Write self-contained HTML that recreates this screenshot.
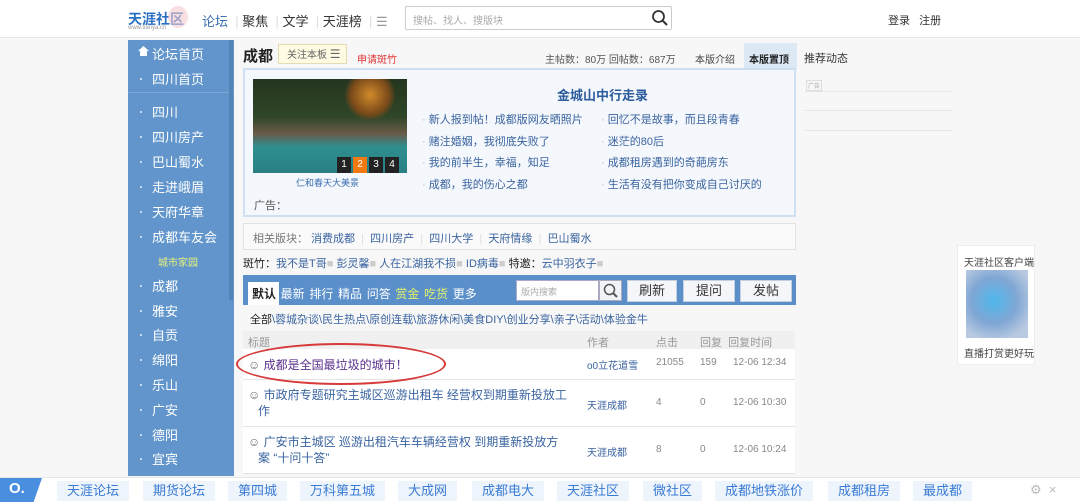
<!DOCTYPE html>
<html><head><meta charset="utf-8"><style>
*{margin:0;padding:0;box-sizing:border-box}
body{width:1080px;height:502px;overflow:hidden;background:#f7f7f7;font-family:"Liberation Sans","Noto Sans CJK SC",sans-serif;font-size:12px;color:#333;position:relative}
.a{position:absolute;white-space:nowrap}
.hd{left:0;top:0;width:1080px;height:38px;background:#fff;border-bottom:1px solid #e6e6e6}
.side{left:128px;top:40px;width:106px;height:436px;background:#6195cb}
.si{position:absolute;left:24px;color:#fff;font-size:13px}
.si:before{content:"";position:absolute;left:-12px;top:9px;width:2px;height:2px;background:#c4d8ef}
.lk{color:#3a64a0}
.btn{position:absolute;top:280px;height:22px;background:#f4f6f9;border:1px solid #c4d0de;font-size:13px;text-align:center;line-height:20px;color:#333}
.bb{position:absolute;top:481px;height:20px;background:#eef4fb;color:#3a7bd5;font-size:13px;line-height:20px;padding:0 10px}
.row{position:absolute;left:243px;width:552px;border-bottom:1px solid #e4e4e4;background:#fff}
</style></head><body>
<div class="a hd"></div>
<div class="a" style="left:128px;top:9px;font-size:14px;font-weight:bold;color:#2b6fc2">天涯社区</div>
<div class="a" style="left:128px;top:25px;font-size:6px;color:#999">www.tianya.cn</div>
<div class="a" style="left:168px;top:6px;width:20px;height:22px;border-radius:50%;background:#f3c9cf;opacity:.6"></div>
<div class="a" style="left:202px;top:11px;font-size:13px;color:#3a6fb0">论坛 <span style="color:#ddd">&nbsp;|&nbsp;</span><span style="color:#333">聚焦</span> <span style="color:#ddd">&nbsp;|&nbsp;</span><span style="color:#333">文学</span> <span style="color:#ddd">&nbsp;|&nbsp;</span><span style="color:#333">天涯榜</span> <span style="color:#ddd">&nbsp;|&nbsp;</span><span style="color:#999">☰</span></div>
<div class="a" style="left:405px;top:6px;width:267px;height:24px;border:1px solid #ccc;background:#fff;border-radius:2px"></div>
<div class="a" style="left:413px;top:12px;font-size:10px;color:#aaa">搜帖、找人、搜版块</div>
<svg class="a" style="left:651px;top:9px" width="18" height="18"><circle cx="7.5" cy="7.5" r="5.5" fill="none" stroke="#333" stroke-width="1.8"/><path d="M11.5 11.5 L16 16" stroke="#333" stroke-width="2"/></svg>
<div class="a" style="left:888px;top:12px;font-size:11px">登录 &nbsp;&nbsp;注册</div>

<div class="a side">
<div class="a" style="left:24px;top:4px;color:#fff;font-size:13px">论坛首页</div>
<svg class="a" style="left:10px;top:6px" width="11" height="10"><path d="M5.5 0 L11 5 L9 5 L9 10 L2 10 L2 5 L0 5 Z" fill="#fff"/></svg>
<div class="si" style="top:29px">四川首页</div>
<div class="a" style="left:0;top:52px;width:106px;border-top:1px solid #7aa6d4"></div>
<div class="si" style="top:62px">四川</div>
<div class="si" style="top:87px">四川房产</div>
<div class="si" style="top:112px">巴山蜀水</div>
<div class="si" style="top:137px">走进峨眉</div>
<div class="si" style="top:162px">天府华章</div>
<div class="si" style="top:187px">成都车友会</div>
<div class="a" style="left:30px;top:214px;font-size:10px;color:#e8f27a">城市家园</div>
<div class="si" style="top:236px">成都</div>
<div class="si" style="top:261px">雅安</div>
<div class="si" style="top:285px">自贡</div>
<div class="si" style="top:310px">绵阳</div>
<div class="si" style="top:335px">乐山</div>
<div class="si" style="top:360px">广安</div>
<div class="si" style="top:385px">德阳</div>
<div class="si" style="top:409px">宜宾</div>
<div class="a" style="left:101px;top:0;width:4px;height:260px;background:#5384b8"></div>
</div>

<div class="a" style="left:243px;top:45px;font-size:15px;font-weight:bold;color:#222">成都</div>
<div class="a" style="left:278px;top:44px;width:69px;height:20px;background:#fffbe3;border:1px solid #e6dcb4;font-size:10px;line-height:18px;padding-left:8px;color:#666">关注本板 <span style="font-size:12px">☰</span></div>
<div class="a" style="left:357px;top:51px;font-size:10px;color:#e53333">申请斑竹</div>
<div class="a" style="left:545px;top:51px;font-size:10px;color:#555">主帖数：80万 回帖数：687万</div>
<div class="a" style="left:695px;top:51px;font-size:10px;color:#444">本版介绍</div>
<div class="a" style="left:744px;top:43px;width:53px;height:26px;background:#dde8f5"></div>
<div class="a" style="left:749px;top:51px;font-size:10px;font-weight:bold;color:#222">本版置顶</div>
<div class="a" style="left:804px;top:50px;font-size:11px;color:#333">推荐动态</div>
<div class="a" style="left:806px;top:80px;font-size:6px;color:#aaa;border:1px solid #ddd;padding:0 1px">广告</div>
<div class="a" style="left:805px;top:91px;width:147px;border-top:1px solid #e6e6e6"></div>
<div class="a" style="left:805px;top:110px;width:147px;border-top:1px solid #e6e6e6"></div>
<div class="a" style="left:805px;top:130px;width:147px;border-top:1px solid #e6e6e6"></div>

<div class="a" style="left:243px;top:68px;width:553px;height:149px;background:#f4f7fb;border:2px solid #cfdff2"></div>
<div class="a" style="left:253px;top:79px;width:154px;height:94px;background:linear-gradient(180deg,#24351f 0%,#2f4628 40%,#6a5a48 58%,#2f8f8f 72%,#2a8084 100%)"></div>
<div class="a" style="left:345px;top:79px;width:50px;height:40px;background:radial-gradient(circle at 50% 40%,#d08a2a,#7a4a1a 55%,transparent 75%)"></div>
<div class="a" style="left:337px;top:157px;width:70px;height:16px;font-size:10px;color:#fff;line-height:16px"><span style="display:inline-block;width:14px;text-align:center;background:#222">1</span><span style="display:inline-block;width:14px;text-align:center;background:#f07a10;margin-left:2px">2</span><span style="display:inline-block;width:14px;text-align:center;background:#222;margin-left:2px">3</span><span style="display:inline-block;width:14px;text-align:center;background:#222;margin-left:2px">4</span></div>
<div class="a" style="left:296px;top:176px;font-size:9px;color:#3a6fb0">仁和春天大美景</div>
<div class="a" style="left:557px;top:85px;font-size:13px;font-weight:bold;color:#2c5c9c">金城山中行走录</div>
<div class="a lk" style="left:422px;top:110px;font-size:11px;line-height:21.5px"><span style="color:#bbb">· </span>新人报到帖！成都版网友晒照片<br><span style="color:#bbb">· </span>赌注婚姻，我彻底失败了<br><span style="color:#bbb">· </span>我的前半生，幸福，知足<br><span style="color:#bbb">· </span>成都，我的伤心之都</div>
<div class="a lk" style="left:601px;top:110px;font-size:11px;line-height:21.5px"><span style="color:#bbb">· </span>回忆不是故事，而且段青春<br><span style="color:#bbb">· </span>迷茫的80后<br><span style="color:#bbb">· </span>成都租房遇到的奇葩房东<br><span style="color:#bbb">· </span>生活有没有把你变成自己讨厌的</div>
<div class="a" style="left:254px;top:197px;font-size:11px;color:#555">广告：</div>

<div class="a" style="left:243px;top:223px;width:553px;height:27px;background:#fafafa;border:1px solid #e2e2e2"></div>
<div class="a" style="left:253px;top:230px;font-size:11px;color:#777">相关版块： <span class="lk">消费成都</span> <span style="color:#ddd">&nbsp;|&nbsp;</span> <span class="lk">四川房产</span> <span style="color:#ddd">&nbsp;|&nbsp;</span> <span class="lk">四川大学</span> <span style="color:#ddd">&nbsp;|&nbsp;</span> <span class="lk">天府情缘</span> <span style="color:#ddd">&nbsp;|&nbsp;</span> <span class="lk">巴山蜀水</span></div>
<div class="a" style="left:243px;top:255px;font-size:11px;color:#222">斑竹：<span class="lk">我不是T哥</span><span style="color:#ccc">■</span> <span class="lk">彭灵馨</span><span style="color:#ccc">■</span> <span class="lk">人在江湖我不损</span><span style="color:#ccc">■</span> <span class="lk">ID病毒</span><span style="color:#ccc">■</span> 特邀：<span class="lk">云中羽衣子</span><span style="color:#ccc">■</span></div>

<div class="a" style="left:243px;top:275px;width:553px;height:30px;background:#5a8fca"></div>
<div class="a" style="left:248px;top:282px;width:31px;height:23px;background:#fff"></div>
<div class="a" style="left:252px;top:285px;font-size:12px;color:#fff;word-spacing:-1px"><b style="color:#222">默认</b>&nbsp; 最新&nbsp; 排行&nbsp; 精品&nbsp; 问答&nbsp; <span style="color:#e2f06a">赏金</span>&nbsp; <span style="color:#e2f06a">吃货</span>&nbsp; 更多</div>
<div class="a" style="left:516px;top:280px;width:83px;height:21px;background:#fff;border:1px solid #aac"></div>
<div class="a" style="left:521px;top:285px;font-size:9px;color:#aaa">版内搜索</div>
<div class="a" style="left:599px;top:280px;width:23px;height:21px;background:#f1f3f6;border:1px solid #aab"></div>
<svg class="a" style="left:602px;top:282px" width="18" height="18"><circle cx="7.5" cy="7.5" r="5" fill="none" stroke="#555" stroke-width="1.5"/><path d="M11 11 L15 15" stroke="#555" stroke-width="2"/></svg>
<div class="btn" style="left:627px;width:50px">刷新</div>
<div class="btn" style="left:683px;width:52px">提问</div>
<div class="btn" style="left:740px;width:52px">发帖</div>

<div class="a" style="left:250px;top:311px;font-size:11px;color:#3a64a0"><span style="color:#222">全部</span>\蓉城杂谈\民生热点\原创连载\旅游休闲\美食DIY\创业分享\亲子\活动\体验金牛</div>
<div class="a" style="left:243px;top:331px;width:552px;height:18px;background:#f0f0f0"></div>
<div class="a" style="left:248px;top:334px;font-size:11px;color:#999">标题</div>
<div class="a" style="left:587px;top:334px;font-size:11px;color:#999">作者</div>
<div class="a" style="left:656px;top:334px;font-size:11px;color:#999">点击</div>
<div class="a" style="left:700px;top:334px;font-size:11px;color:#999">回复&nbsp; 回复时间</div>

<div class="row" style="top:349px;height:31px"></div>
<div class="row" style="top:380px;height:47px"></div>
<div class="row" style="top:427px;height:47px"></div>
<div class="a" style="left:248px;top:356px;font-size:12px;color:#3a64a0"><span style="color:#666">☺</span> <span style="color:#5a2f8a">成都是全国最垃圾的城市！</span></div>
<div class="a" style="left:248px;top:387px;font-size:12px;color:#3a64a0;line-height:16px"><span style="color:#666">☺</span> 市政府专题研究主城区巡游出租车 经营权到期重新投放工<br>&nbsp;&nbsp;&nbsp;作</div>
<div class="a" style="left:248px;top:434px;font-size:12px;color:#3a64a0;line-height:16px"><span style="color:#666">☺</span> 广安市主城区 巡游出租汽车车辆经营权 到期重新投放方<br>&nbsp;&nbsp;&nbsp;案 “十问十答”</div>
<div class="a" style="left:587px;top:357px;font-size:10px;color:#3a64a0">o0立花道雪</div>
<div class="a" style="left:587px;top:397px;font-size:10px;color:#3a64a0">天涯成都</div>
<div class="a" style="left:587px;top:444px;font-size:10px;color:#3a64a0">天涯成都</div>
<div class="a" style="left:656px;top:357px;font-size:10px;color:#888">21055</div>
<div class="a" style="left:700px;top:357px;font-size:10px;color:#888">159</div>
<div class="a" style="left:733px;top:357px;font-size:10px;color:#888">12-06 12:34</div>
<div class="a" style="left:656px;top:397px;font-size:10px;color:#888">4</div>
<div class="a" style="left:700px;top:397px;font-size:10px;color:#888">0</div>
<div class="a" style="left:733px;top:397px;font-size:10px;color:#888">12-06 10:30</div>
<div class="a" style="left:656px;top:444px;font-size:10px;color:#888">8</div>
<div class="a" style="left:700px;top:444px;font-size:10px;color:#888">0</div>
<div class="a" style="left:733px;top:444px;font-size:10px;color:#888">12-06 10:24</div>
<div class="a" style="left:236px;top:343px;width:210px;height:42px;border:2px solid #d63a3a;border-radius:50%"></div>

<div class="a" style="left:957px;top:245px;width:78px;height:120px;background:#fff;border:1px solid #eee"></div>
<div class="a" style="left:964px;top:254px;font-size:10px;color:#444">天涯社区客户端</div>
<div class="a" style="left:966px;top:270px;width:62px;height:68px;background:radial-gradient(circle at 45% 45%,#4fb8ec,#7fa6d4 45%,#b8c9e0 80%);"></div>
<div class="a" style="left:964px;top:345px;font-size:10px;color:#444">直播打赏更好玩</div>

<div class="a" style="left:0;top:477px;width:1080px;height:25px;background:#fff;border-top:1px solid #e6e6e6"></div>
<div class="a" style="left:0;top:478px;width:42px;height:24px;background:#4a8ee0;clip-path:polygon(0 0,100% 0,80% 100%,0 100%)"></div>
<div class="a" style="left:9px;top:480px;font-size:15px;font-weight:bold;color:#fff">O.</div>
<div class="bb" style="left:57px">天涯论坛</div>
<div class="bb" style="left:143px">期货论坛</div>
<div class="bb" style="left:228px">第四城</div>
<div class="bb" style="left:300px">万科第五城</div>
<div class="bb" style="left:398px">大成网</div>
<div class="bb" style="left:472px">成都电大</div>
<div class="bb" style="left:557px">天涯社区</div>
<div class="bb" style="left:643px">微社区</div>
<div class="bb" style="left:715px">成都地铁涨价</div>
<div class="bb" style="left:828px">成都租房</div>
<div class="bb" style="left:913px">最成都</div>
<div class="a" style="left:1030px;top:482px;font-size:13px;color:#bbb">⚙ &nbsp;×</div>
</body></html>
